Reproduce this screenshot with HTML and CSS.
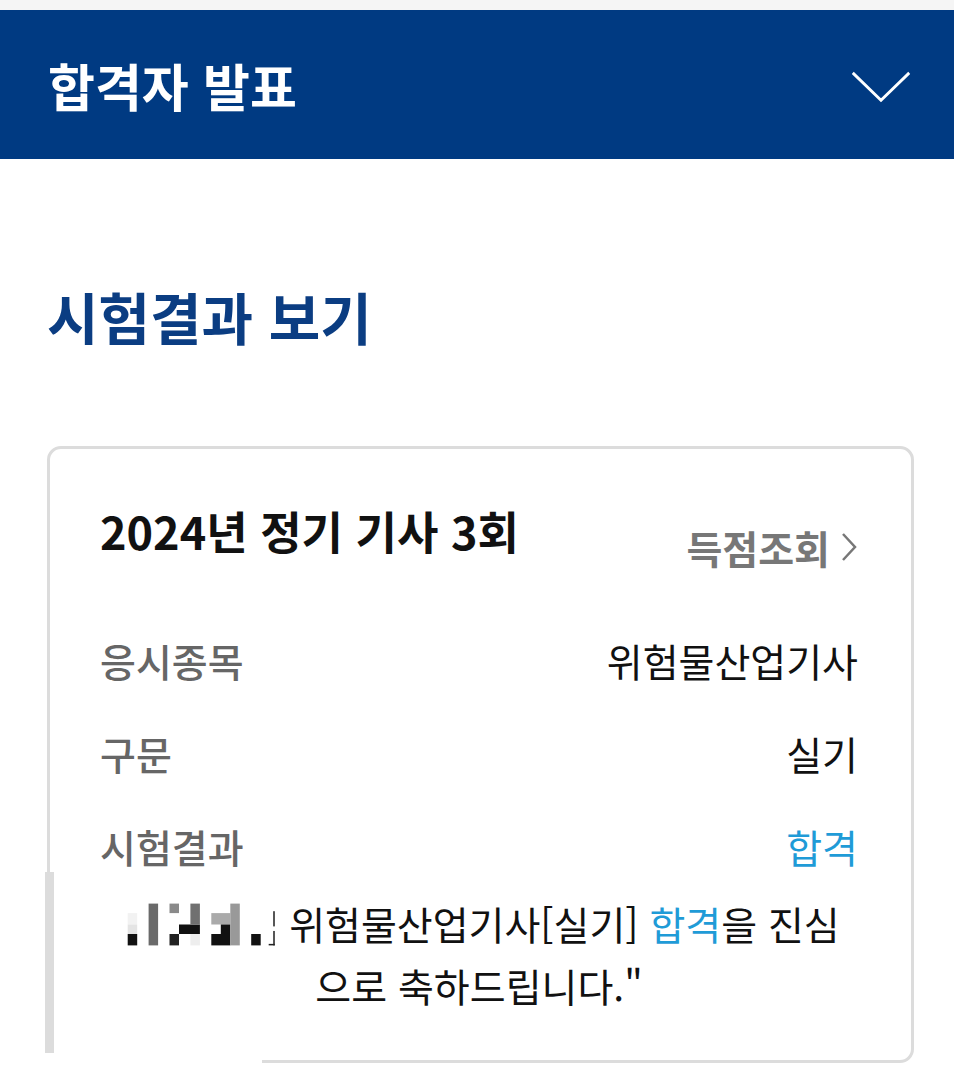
FILE: index.html
```html
<!DOCTYPE html>
<html lang="ko">
<head>
<meta charset="UTF-8" />
<title>합격자 발표</title>
<link rel="stylesheet" href="styles.css">
</head>
<body>
<div class="topline"></div>

<header class="bar">
  <h1>합격자 발표</h1>
  <svg class="toggle" viewBox="0 0 64 34" xmlns="http://www.w3.org/2000/svg">
    <polyline points="2,2 32,31 62,2" fill="none" stroke="white" stroke-width="3" />
  </svg>
</header>

<main class="content">
  <h2 class="section-title">시험결과 보기</h2>

  <section class="card">
    <div class="card-head">
      <span class="exam-name">2024년 정기 기사 3회</span>
      <a class="score-link" href="#">득점조회
        <svg class="arrow" viewBox="0 0 18 32" xmlns="http://www.w3.org/2000/svg">
          <polyline points="3,3 15,16 3,29" fill="none" stroke="#777" stroke-width="2.5" />
        </svg>
      </a>
    </div>

    <div class="row">
      <span class="label">응시종목</span>
      <span class="value">위험물산업기사</span>
    </div>
    <div class="row">
      <span class="label">구문</span>
      <span class="value">실기</span>
    </div>
    <div class="row">
      <span class="label">시험결과</span>
      <span class="value pass">합격</span>
    </div>

    <p class="message">
      <svg class="mosaic" viewBox="0 0 420 150" xmlns="http://www.w3.org/2000/svg">
        <rect x="0" y="0" width="420" height="150" fill="#fff" />
        <rect x="25" y="45" width="25" height="30" fill="#f2f2f2" />
        <rect x="25" y="75" width="25" height="25" fill="#e4e4e4" />
        <rect x="25" y="100" width="25" height="30" fill="#111" />
        <rect x="80" y="20" width="25" height="110" fill="#6a6a6a" />
        <rect x="135" y="20" width="25" height="25" fill="#8a8a8a" />
        <rect x="135" y="100" width="25" height="30" fill="#222" />
        <rect x="160" y="75" width="55" height="25" fill="#111" />
        <rect x="190" y="20" width="25" height="55" fill="#707070" />
        <rect x="190" y="100" width="25" height="30" fill="#eee" />
        <rect x="245" y="45" width="50" height="30" fill="#aaa" />
        <rect x="270" y="75" width="25" height="25" fill="#111" />
        <rect x="245" y="100" width="50" height="30" fill="#111" />
        <rect x="295" y="20" width="25" height="110" fill="#999" />
        <rect x="350" y="100" width="25" height="30" fill="#111" />
        <rect x="408" y="40" width="4" height="40" fill="#222" />
        <rect x="408" y="92" width="4" height="38" fill="#222" />
        <rect x="396" y="126" width="16" height="4" fill="#222" />
      </svg> 위험물산업기사[실기] <span class="pass">합격</span>을 진심<br>으로 축하드립니다."
    </p>

    <div class="redact"><div class="redact-bar"></div></div>
  </section>
</main>
</body>
</html>
```

FILE: styles.css
```css
body {
  margin: 0;
  background: #fff;
  font-family: "Noto Sans CJK KR", "Noto Sans", sans-serif;
  color: #111;
  overflow: hidden;
}
.topline {
  height: 10px;
  background: #f5f5f5;
}
.bar {
  height: 149px;
  background: #003a82;
  display: flex;
  align-items: center;
  justify-content: space-between;
  padding: 0 42px 0 48px;
}
.bar h1 {
  margin: 0;
  color: #fff;
  font-size: 51px;
  font-weight: 700;
}
.toggle {
  width: 62px;
  height: 32px;
  margin-top: 4px;
}
.content {
  padding: 0 40px 0 47px;
}
.section-title {
  margin: 122px 0 95px;
  color: #0b3d82;
  font-size: 56px;
  font-weight: 700;
  line-height: 70px;
}
.card {
  position: relative;
  border: 3px solid #dcdcdc;
  border-radius: 14px;
  padding: 52px 53px 44px 50px;
}
.card-head {
  display: flex;
  justify-content: space-between;
  align-items: flex-start;
  height: 112px;
}
.exam-name {
  font-size: 45px;
  font-weight: 700;
  line-height: 60px;
}
.score-link {
  display: flex;
  align-items: center;
  gap: 10px;
  margin-top: 16px;
  color: #777;
  font-size: 39px;
  font-weight: 700;
  line-height: 60px;
  text-decoration: none;
}
.arrow {
  width: 18px;
  height: 32px;
}
.row {
  display: flex;
  justify-content: space-between;
  align-items: center;
  height: 93px;
  font-size: 39px;
}
.label {
  color: #666;
  font-weight: 500;
}
.value {
  color: #111;
}
.pass {
  color: #1f9bd7;
}
.message {
  margin: 0;
  text-align: center;
  font-size: 39px;
  line-height: 62px;
}
.mosaic {
  position: relative;
  z-index: 1;
  display: inline-block;
  width: 160px;
  height: 57px;
  vertical-align: -13px;
}
.redact {
  position: absolute;
  left: -6px;
  top: 423px;
  width: 218px;
  bottom: -10px;
  background: #fff;
}
.redact-bar {
  margin-left: 1px;
  width: 9px;
  height: 181px;
  background: #dcdcdc;
}
```
